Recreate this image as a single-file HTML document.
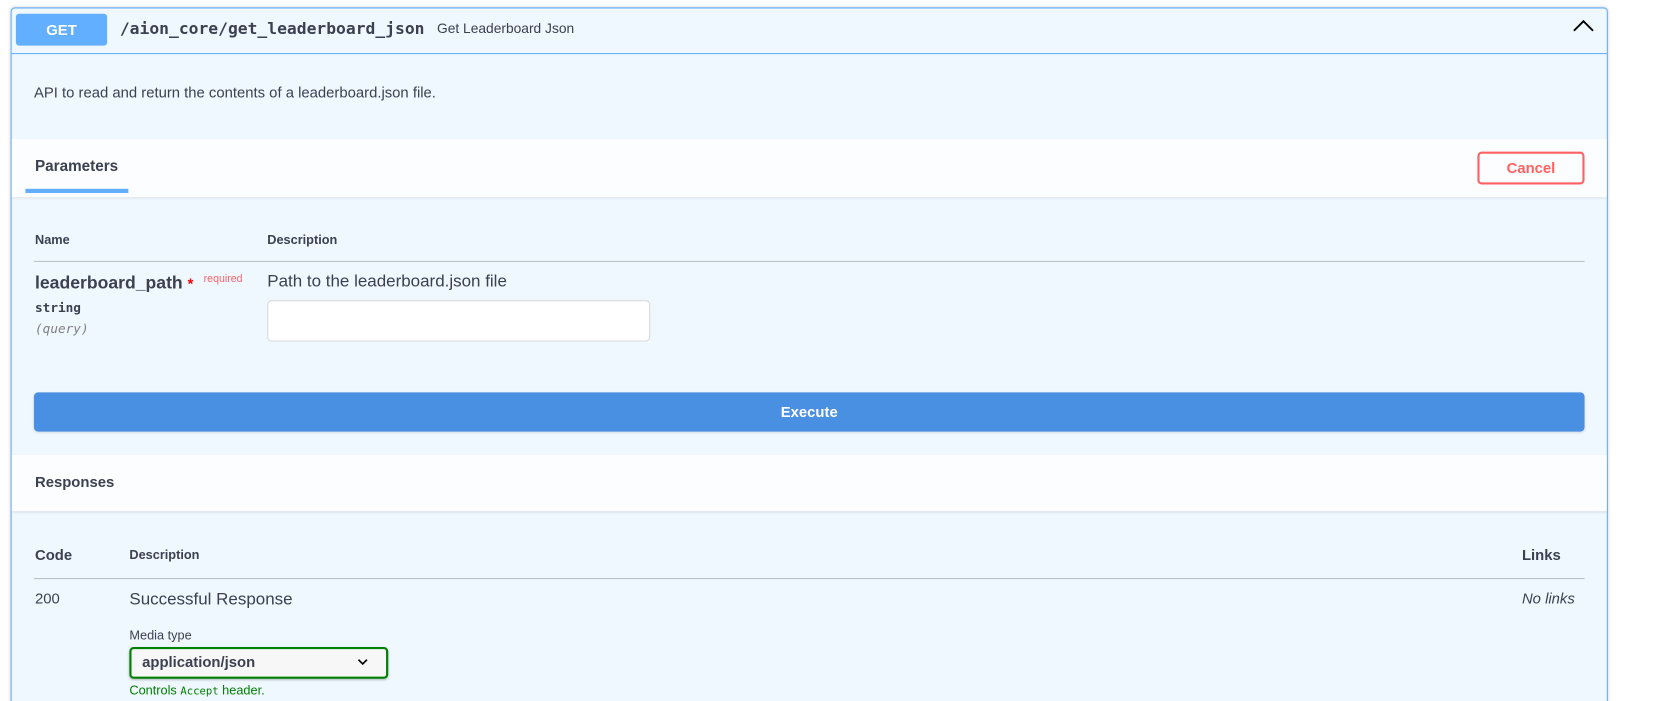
<!DOCTYPE html>
<html style="overflow:hidden;width:1663px;height:701px"><head><style>
body{margin:0;width:1663px;height:701px;background:#fff;font-family:"Liberation Sans",sans-serif;color:#3b4151;position:relative;overflow:hidden}
#w{position:absolute;left:0;top:0;width:1568px;height:661px;transform:scale(1.0606);transform-origin:0 0;overflow:hidden}
.a{position:absolute;white-space:nowrap}
.card{position:absolute;left:10px;top:7px;width:1504px;height:670px;border:1px solid #61affe;border-radius:4px;background:#eff7ff;box-shadow:0 0 3px rgba(0,0,0,.19)}
.bar{position:absolute;left:11px;width:1504px;background:#fcfdff;box-shadow:0 1px 2px rgba(0,0,0,.1)}
.mono{font-family:"DejaVu Sans Mono",monospace}
</style></head><body><div id="w">
<div class="card"></div>
<div class="a" style="left:11px;top:50px;width:1504px;height:1px;background:#61affe"></div>
<div class="a" style="left:15px;top:13px;width:86px;height:30px;background:#61affe;border-radius:3px;color:#fff;font-weight:bold;font-size:14px;line-height:30px;text-align:center">GET</div>
<div class="a mono" style="left:113px;top:18px;font-size:15.4px;font-weight:bold;color:#3b4151">/aion_core/get_leaderboard_json</div>
<div class="a" style="left:412px;top:19px;font-size:13px">Get Leaderboard Json</div>
<svg class="a" style="left:1482px;top:16px" width="22" height="16" viewBox="0 0 22 16"><path d="M2 13 L11 4 L20 13" fill="none" stroke="#000" stroke-width="1.8"/></svg>
<div class="a" style="left:32px;top:79px;font-size:14px">API to read and return the contents of a leaderboard.json file.</div>
<div class="bar" style="top:131px;height:55px"></div>
<div class="a" style="left:33px;top:149px;font-size:14.4px;font-weight:bold">Parameters</div>
<div class="a" style="left:24px;top:178px;width:97px;height:4px;background:#61affe"></div>
<div class="a" style="left:1393px;top:143px;width:97px;height:27px;border:2px solid #ff6060;border-radius:4px;color:#ff6060;font-weight:bold;font-size:14px;line-height:27px;text-align:center">Cancel</div>
<div class="a" style="left:33px;top:219px;font-size:12px;font-weight:bold">Name</div>
<div class="a" style="left:252px;top:219px;font-size:12px;font-weight:bold">Description</div>
<div class="a" style="left:32px;top:246px;width:1462px;height:1px;background:rgba(59,65,81,.3)"></div>
<div class="a" style="left:33px;top:257px;font-size:16.6px;font-weight:bold">leaderboard_path <span style="color:red;font-size:14px">*</span></div>
<div class="a" style="left:192px;top:258px;font-size:10px;color:rgba(255,0,0,.6)">required</div>
<div class="a mono" style="left:33px;top:283px;font-size:12px;font-weight:bold">string</div>
<div class="a mono" style="left:33px;top:303px;font-size:12px;font-style:italic;color:gray">(query)</div>
<div class="a" style="left:252px;top:257px;font-size:16px">Path to the leaderboard.json file</div>
<div class="a" style="left:252px;top:283px;width:359px;height:37px;background:#fff;border:1px solid #d9d9d9;border-radius:4px"></div>
<div class="a" style="left:32px;top:370px;width:1462px;height:37px;background:#4990e2;border-radius:4px;color:#fff;font-weight:bold;font-size:14px;line-height:37px;text-align:center;box-shadow:0 1px 2px rgba(0,0,0,.1)">Execute</div>
<div class="bar" style="top:429px;height:53px"></div>
<div class="a" style="left:33px;top:446px;font-size:14px;font-weight:bold">Responses</div>
<div class="a" style="left:33px;top:515px;font-size:14px;font-weight:bold">Code</div>
<div class="a" style="left:122px;top:516px;font-size:12px;font-weight:bold">Description</div>
<div class="a" style="left:1435px;top:515px;font-size:14px;font-weight:bold">Links</div>
<div class="a" style="left:32px;top:545px;width:1462px;height:1px;background:rgba(59,65,81,.3)"></div>
<div class="a" style="left:33px;top:556px;font-size:14px">200</div>
<div class="a" style="left:122px;top:557px;font-size:16px">Successful Response</div>
<div class="a" style="left:1435px;top:556px;font-size:14px;font-style:italic">No links</div>
<div class="a" style="left:122px;top:592px;font-size:12px">Media type</div>
<div class="a" style="left:122px;top:610px;width:240px;height:26px;border:2px solid green;border-radius:4px;background:#f7f7f7;box-shadow:0 1px 2px rgba(0,0,0,.25)"></div>
<div class="a" style="left:134px;top:616px;font-size:14px;font-weight:bold">application/json</div>
<svg class="a" style="left:336px;top:619px" width="12" height="10" viewBox="0 0 12 10"><path d="M2 3 L6 7 L10 3" fill="none" stroke="#000" stroke-width="1.6"/></svg>
<div class="a" style="left:122px;top:644px;font-size:12px;color:green">Controls <span class="mono" style="font-size:10px">Accept</span> header.</div>
</div></body></html>
